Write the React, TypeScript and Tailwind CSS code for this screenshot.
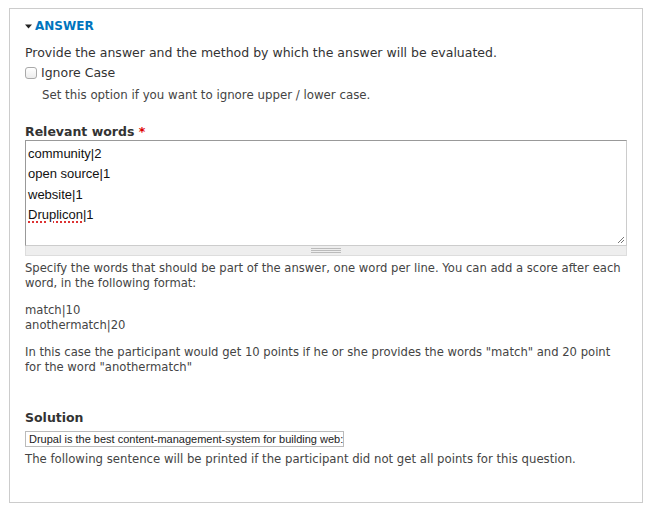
const words = ["community|2", "open source|1", "website|1", "Druplicon|1"];

export default function App() {
  return (
    <div className="h-[505px] w-[649px] bg-white px-[9px] pt-[8px] font-['DejaVu_Sans',sans-serif] text-[12px] text-[#333]">
      <fieldset className="h-[495px] w-[633px] border border-[#ccc] px-[15px]">
        <div className="mt-[9px] flex items-center gap-[3px] text-[12px] font-bold leading-[16px] text-[#0074bd]">
          <svg width="7" height="5" viewBox="0 0 7 5" className="mt-[1px]">
            <path d="M0 0.5h7L3.5 4.5z" fill="#222" />
          </svg>
          <span>ANSWER</span>
        </div>

        <p className="mt-[11px] text-[12.5px] leading-[16px]">
          Provide the answer and the method by which the answer will be evaluated.
        </p>

        <label className="mt-[4px] flex items-center gap-[4px] leading-[16px]">
          <span className="h-[12px] w-[12px] rounded-[3px] border border-[#a9a9a9] bg-gradient-to-b from-white to-[#ececec]" />
          <span className="text-[12.5px]">Ignore Case</span>
        </label>
        <p className="mt-[6px] pl-[17px] text-[11.8px] leading-[16px] text-[#444]">
          Set this option if you want to ignore upper / lower case.
        </p>

        <div className="mt-[21px] text-[12.5px] font-bold leading-[16px] text-[#333]">
          Relevant words <span className="text-[#d00]">*</span>
        </div>

        <div className="w-[602px]">
          <div className="relative h-[106px] border border-[#999] border-b-[#ccc] border-r-[#ccc] bg-white px-[2px] pt-[3px] font-['Liberation_Sans',Arial,sans-serif] text-[13px] leading-[20.4px] text-[#111]">
            {words.map((w) => (
              <div key={w}>
                {w.startsWith("Druplicon") ? (
                  <>
                    <span className="underline decoration-[#d33] decoration-dotted decoration-[1.5px] underline-offset-[2px]">
                      Druplicon
                    </span>
                    |1
                  </>
                ) : (
                  w
                )}
              </div>
            ))}
            <svg width="8" height="8" viewBox="0 0 8 8" className="absolute bottom-[1px] right-[1px]">
              <path d="M7 1L1 7M7 4L4 7" stroke="#777" strokeWidth="1" />
            </svg>
          </div>
          <div className="flex h-[10px] items-center justify-center border border-t-0 border-[#ddd] bg-[#eee]">
            <div className="flex w-[30px] flex-col gap-[1px]">
              <div className="h-px bg-[#bbb]" />
              <div className="h-px bg-[#bbb]" />
              <div className="h-px bg-[#bbb]" />
            </div>
          </div>
        </div>

        <div className="mt-[5px] text-[11.6px] leading-[15px] text-[#444]">
          <p>
            Specify the words that should be part of the answer, one word per line. You can add a score after each
            word, in the following format:
          </p>
          <p className="mt-[12px] leading-[14.5px]">
            match|10
            <br />
            anothermatch|20
          </p>
          <p className="mt-[13px]">
            In this case the participant would get 10 points if he or she provides the words "match" and 20 point
            for the word "anothermatch"
          </p>
        </div>

        <div className="mt-[35px] text-[12.5px] font-bold leading-[16px] text-[#333]">Solution</div>
        <div className="mt-[5px] flex h-[16px] w-[319px] items-center overflow-hidden whitespace-nowrap border border-[#bbb] px-[3px] font-['Liberation_Sans',Arial,sans-serif] text-[11px] text-[#222]">
          Drupal is the best content-management-system for building web:
        </div>
        <p className="mt-[4px] text-[11.7px] leading-[16px] text-[#444]">
          The following sentence will be printed if the participant did not get all points for this question.
        </p>
      </fieldset>
    </div>
  );
}
